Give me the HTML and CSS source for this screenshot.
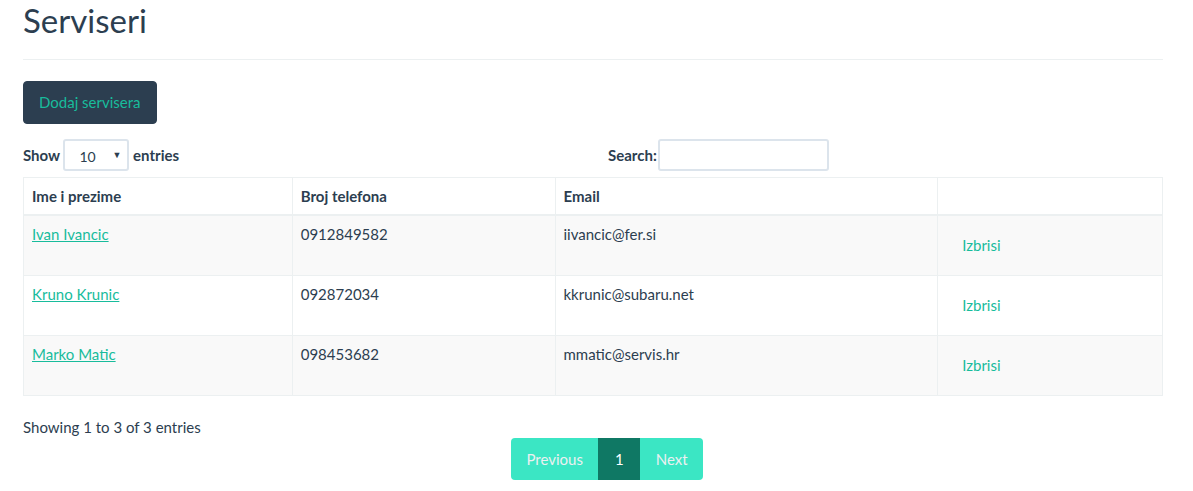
FILE: index.html
```html
<!DOCTYPE html>
<html lang="hr">
<head>
<meta charset="utf-8">
<title>Serviseri</title>
<link rel="stylesheet" href="styles.css">
</head>
<body>
<div class="container">
  <div class="page-header">
    <h1 class="title">Serviseri</h1>
  </div>
  <button class="btn btn-primary" type="button">Dodaj servisera</button>

  <div class="dt-row dt-top">
    <div class="col col-6">
      <label class="dt-label">Show <span class="select-wrap"><select class="dt-select">
          <option>10</option>
          <option>25</option>
          <option>50</option>
          <option>100</option>
        </select><span class="select-arrow">▼</span></span> entries</label>
    </div>
    <div class="col col-6">
      <label class="dt-label">Search:<input class="dt-input" type="search"></label>
    </div>
  </div>

  <table class="table">
    <colgroup>
      <col class="c1"><col class="c2"><col class="c3"><col class="c4">
    </colgroup>
    <thead>
      <tr>
        <th>Ime i prezime</th>
        <th>Broj telefona</th>
        <th>Email</th>
        <th></th>
      </tr>
    </thead>
    <tbody>
      <tr class="odd">
        <td><a href="#" class="name-link">Ivan Ivancic</a></td>
        <td>0912849582</td>
        <td>iivancic@fer.si</td>
        <td><button class="btn btn-link" type="button">Izbrisi</button></td>
      </tr>
      <tr>
        <td><a href="#" class="name-link">Kruno Krunic</a></td>
        <td>092872034</td>
        <td>kkrunic@subaru.net</td>
        <td><button class="btn btn-link" type="button">Izbrisi</button></td>
      </tr>
      <tr class="odd">
        <td><a href="#" class="name-link">Marko Matic</a></td>
        <td>098453682</td>
        <td>mmatic@servis.hr</td>
        <td><button class="btn btn-link" type="button">Izbrisi</button></td>
      </tr>
    </tbody>
  </table>

  <div class="dt-row dt-bottom">
    <div class="col col-5">
      <div class="dt-info">Showing 1 to 3 of 3 entries</div>
    </div>
    <div class="col col-7">
      <ul class="pagination">
        <li class="disabled"><a href="#">Previous</a></li>
        <li class="active"><a href="#">1</a></li>
        <li class="disabled"><a href="#">Next</a></li>
      </ul>
    </div>
  </div>
</div>
</body>
</html>
```

FILE: styles.css
```css
* { box-sizing: border-box; }

html, body {
  margin: 0;
  padding: 0;
  background: #ffffff;
}

body {
  font-family: Lato, "Open Sans", "Liberation Sans", sans-serif;
  font-size: 15px;
  line-height: 21px;
  color: #2c3e50;
}

.container {
  width: 1140px;
  margin-left: 23px;
}

.page-header {
  border-bottom: 1px solid #ecf0f1;
  padding-bottom: 19px;
}

.title {
  margin: 0;
  font-size: 33px;
  font-weight: 400;
  line-height: 40px;
  color: #2c3e50;
}

.btn {
  font-family: inherit;
  font-size: 15px;
  line-height: 21px;
  padding: 10px 15px;
  border: 1px solid transparent;
  border-radius: 4px;
  cursor: pointer;
  display: inline-block;
}

.btn-primary {
  margin-top: 21px;
  background: #2c3e50;
  border-color: #2c3e50;
  color: #18bc9c;
}

.btn-link {
  background: transparent;
  color: #18bc9c;
  border-color: transparent;
}

.dt-row {
  display: flex;
  margin: 0 -15px;
}

.col { padding: 0 15px; }
.col-6 { width: 50%; }
.col-5 { width: 41.6667%; }
.col-7 { width: 58.3333%; }

.dt-top {
  margin-top: 15px;
  height: 32px;
  align-items: center;
}

.dt-label {
  font-weight: 700;
  display: inline-block;
  line-height: 32px;
}

.select-wrap {
  position: relative;
  display: inline-block;
  vertical-align: top;
  width: 66px;
  height: 32px;
}

.dt-select {
  display: block;
  width: 66px;
  height: 32px;
  margin: 0;
  padding: 2px 0 0 14px;
  font-family: Lato, "Liberation Sans", sans-serif;
  font-size: 14px;
  font-weight: 400;
  color: #2c3e50;
  background: #ffffff;
  border: 2px solid #dce4ec;
  border-radius: 3px;
  appearance: none;
  -webkit-appearance: none;
}

.select-arrow {
  position: absolute;
  right: 8px;
  top: 0;
  font-size: 9px;
  line-height: 32px;
  font-weight: 400;
  color: #2c3e50;
  pointer-events: none;
}

.dt-input {
  vertical-align: top;
  width: 171px;
  height: 32px;
  margin: 0 0 0 1px;
  border: 2px solid #dce4ec;
  border-radius: 3px;
  font-family: inherit;
  font-size: 15px;
  padding: 4px 6px;
  background: #ffffff;
}

.table {
  width: 100%;
  margin-top: 6px;
  margin-bottom: 21px;
  border-collapse: collapse;
  border: 1px solid #ecf0f1;
}

.c1 { width: 269px; }
.c2 { width: 263px; }
.c3 { width: 383px; }
.c4 { width: 225px; }

.table th,
.table td {
  border: 1px solid #ecf0f1;
  padding: 8px;
  text-align: left;
  vertical-align: top;
  line-height: 21px;
}

.table th {
  font-weight: 700;
  padding-bottom: 7px;
  border-bottom-width: 2px;
}

.table tbody tr.odd { background: #f9f9f9; }

.name-link {
  color: #18bc9c;
  text-decoration: underline;
}

.dt-bottom { align-items: flex-start; }

.dt-info {
  line-height: 21px;
}

.pagination {
  display: flex;
  list-style: none;
  margin: 21px 0 0;
  padding: 0;
}

.pagination li a {
  display: block;
  padding: 11px 15px 10px 16px;
  line-height: 21px;
  text-decoration: none;
  background: #3be6c4;
  color: #ecf0f1;
}

.pagination li:first-child a { border-radius: 4px 0 0 4px; padding-left: 16px; padding-right: 15px; }
.pagination li:last-child a { border-radius: 0 4px 4px 0; }

.pagination li.active a {
  background: #0f7864;
  color: #ffffff;
  padding-left: 17px;
  padding-right: 16px;
}
```
